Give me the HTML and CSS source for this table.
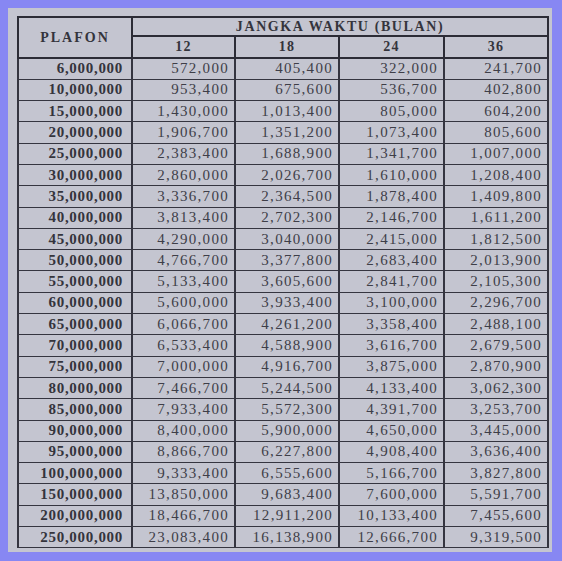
FILE: index.html
```html
<!DOCTYPE html>
<html>
<head>
<meta charset="utf-8">
<link rel="stylesheet" href="styles.css">
</head>
<body>
<div class="frame">
  <div class="paper">
    <table class="rates">
      <colgroup>
        <col class="c-plafon">
        <col class="c-12">
        <col class="c-18">
        <col class="c-24">
        <col class="c-36">
      </colgroup>
      <thead>
        <tr class="h1">
          <th rowspan="2" class="plafon-head">PLAFON</th>
          <th colspan="4" class="group-head">JANGKA WAKTU (BULAN)</th>
        </tr>
        <tr class="h2">
          <th>12</th><th>18</th><th>24</th><th>36</th>
        </tr>
      </thead>
      <tbody>
        <tr><td class="pl">6,000,000</td><td>572,000</td><td>405,400</td><td>322,000</td><td>241,700</td></tr>
        <tr><td class="pl">10,000,000</td><td>953,400</td><td>675,600</td><td>536,700</td><td>402,800</td></tr>
        <tr><td class="pl">15,000,000</td><td>1,430,000</td><td>1,013,400</td><td>805,000</td><td>604,200</td></tr>
        <tr><td class="pl">20,000,000</td><td>1,906,700</td><td>1,351,200</td><td>1,073,400</td><td>805,600</td></tr>
        <tr><td class="pl">25,000,000</td><td>2,383,400</td><td>1,688,900</td><td>1,341,700</td><td>1,007,000</td></tr>
        <tr><td class="pl">30,000,000</td><td>2,860,000</td><td>2,026,700</td><td>1,610,000</td><td>1,208,400</td></tr>
        <tr><td class="pl">35,000,000</td><td>3,336,700</td><td>2,364,500</td><td>1,878,400</td><td>1,409,800</td></tr>
        <tr><td class="pl">40,000,000</td><td>3,813,400</td><td>2,702,300</td><td>2,146,700</td><td>1,611,200</td></tr>
        <tr><td class="pl">45,000,000</td><td>4,290,000</td><td>3,040,000</td><td>2,415,000</td><td>1,812,500</td></tr>
        <tr><td class="pl">50,000,000</td><td>4,766,700</td><td>3,377,800</td><td>2,683,400</td><td>2,013,900</td></tr>
        <tr><td class="pl">55,000,000</td><td>5,133,400</td><td>3,605,600</td><td>2,841,700</td><td>2,105,300</td></tr>
        <tr><td class="pl">60,000,000</td><td>5,600,000</td><td>3,933,400</td><td>3,100,000</td><td>2,296,700</td></tr>
        <tr><td class="pl">65,000,000</td><td>6,066,700</td><td>4,261,200</td><td>3,358,400</td><td>2,488,100</td></tr>
        <tr><td class="pl">70,000,000</td><td>6,533,400</td><td>4,588,900</td><td>3,616,700</td><td>2,679,500</td></tr>
        <tr><td class="pl">75,000,000</td><td>7,000,000</td><td>4,916,700</td><td>3,875,000</td><td>2,870,900</td></tr>
        <tr><td class="pl">80,000,000</td><td>7,466,700</td><td>5,244,500</td><td>4,133,400</td><td>3,062,300</td></tr>
        <tr><td class="pl">85,000,000</td><td>7,933,400</td><td>5,572,300</td><td>4,391,700</td><td>3,253,700</td></tr>
        <tr><td class="pl">90,000,000</td><td>8,400,000</td><td>5,900,000</td><td>4,650,000</td><td>3,445,000</td></tr>
        <tr><td class="pl">95,000,000</td><td>8,866,700</td><td>6,227,800</td><td>4,908,400</td><td>3,636,400</td></tr>
        <tr><td class="pl">100,000,000</td><td>9,333,400</td><td>6,555,600</td><td>5,166,700</td><td>3,827,800</td></tr>
        <tr><td class="pl">150,000,000</td><td>13,850,000</td><td>9,683,400</td><td>7,600,000</td><td>5,591,700</td></tr>
        <tr><td class="pl">200,000,000</td><td>18,466,700</td><td>12,911,200</td><td>10,133,400</td><td>7,455,600</td></tr>
        <tr><td class="pl">250,000,000</td><td>23,083,400</td><td>16,138,900</td><td>12,666,700</td><td>9,319,500</td></tr>
      </tbody>
    </table>
  </div>
</div>
</body>
</html>
```
FILE: styles.css
```css
html, body {
  margin: 0;
  padding: 0;
  background: #8787f3;
}
.frame {
  width: 562px;
  height: 561px;
  padding: 8px 10px 9px 8px;
  box-sizing: border-box;
}
.paper {
  width: 544px;
  height: 544px;
  background: #c4c5d0;
  padding: 8px 5px 0 9px;
  box-sizing: border-box;
}
.rates {
  width: 530px;
  border-collapse: collapse;
  table-layout: fixed;
  font-family: "Liberation Serif", "Times New Roman", serif;
  color: #3e3e48;
  font-size: 15px;
  letter-spacing: 1.3px;
}
.c-plafon { width: 114px; }
.c-12 { width: 103px; }
.c-18 { width: 104px; }
.c-24 { width: 105px; }
.c-36 { width: 104px; }
.rates th, .rates td {
  border: 2px solid #2c2c36;
  padding: 0;
  line-height: 1;
}
.rates th {
  font-weight: bold;
  color: #34343c;
  font-size: 14px;
  text-align: center;
}
.h1 { height: 19px; }
.h2 { height: 22px; }
.plafon-head {
  letter-spacing: 2px;
  vertical-align: middle;
}
.group-head {
  letter-spacing: 1.6px;
}
.rates tbody tr { height: 21.3px; }
.rates td {
  text-align: right;
  padding-right: 5px;
  border-top-width: 1.5px;
  border-bottom-width: 1.5px;
  border-color: #353540;
}
.rates td.pl {
  font-weight: bold;
  letter-spacing: 0.7px;
  padding-right: 8px;
  color: #34343c;
}
```
